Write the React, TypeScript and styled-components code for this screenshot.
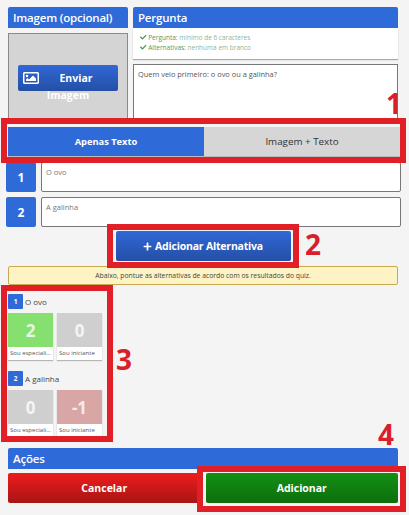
import React from 'react';
import styled, { createGlobalStyle } from 'styled-components';
import { FaCheck, FaPlus, FaRegImage } from 'react-icons/fa';

const GlobalStyle = createGlobalStyle`
  html, body {
    margin: 0;
    background: #f4f4f4;
    font-family: "Open Sans", "Liberation Sans", sans-serif;
  }
  * {
    box-sizing: border-box;
  }
`;

const Page = styled.div`
  position: relative;
  width: 409px;
  height: 515px;
  padding: 7px 11px 0 8px;
  overflow: hidden;
`;

const TopRow = styled.div`
  display: flex;
  gap: 5px;
  height: 120px;
`;

const LeftColumn = styled.div`
  width: 120px;
  flex: none;
`;

const RightColumn = styled.div`
  flex: 1;
`;

const SectionHeader = styled.div`
  height: 21px;
  padding-left: 5px;
  background: #2f6ad9;
  border-radius: 2px 2px 0 0;
  color: #fff;
  font-size: 11.5px;
  font-weight: 600;
  letter-spacing: -0.2px;
  line-height: 21px;
  white-space: nowrap;
`;

const ImageBox = styled.div`
  height: 87px;
  margin-top: 5px;
  padding-top: 31px;
  display: flex;
  justify-content: center;
  background: #d4d4d4;
  border: 1px solid #8a8a8a;
`;

const UploadButton = styled.div`
  position: relative;
  width: 100px;
  height: 26px;
  padding-top: 5px;
  background: linear-gradient(#3068d6, #244fa6);
  border-radius: 2px;
  color: #fff;
  font-size: 10.5px;
  font-weight: 700;
  line-height: 17px;
  text-align: center;

  svg {
    position: absolute;
    left: 5px;
    top: 5px;
    font-size: 16px;
  }
`;

const UploadFirstWord = styled.div`
  padding-left: 16px;
`;

const Hints = styled.div`
  height: 31px;
  padding: 5px 7px 0;
  background: #fff;
  box-shadow: 0 1px 1px rgba(0, 0, 0, 0.3);
  font-size: 6.5px;
  line-height: 10px;
  color: #8fb69a;
`;

const HintLine = styled.div`
  white-space: nowrap;

  svg {
    font-size: 6.5px;
    color: #3c9a4e;
    vertical-align: -0.5px;
  }

  b {
    font-weight: 400;
    color: #4f9a63;
  }
`;

const Question = styled.div`
  height: 60px;
  margin-top: 5px;
  padding: 3px 4px;
  background: #fff;
  border: 1px solid #777;
  font-size: 7.4px;
  line-height: 12px;
  color: #555;
`;

const TypeTabs = styled.div`
  display: flex;
  height: 30px;
  margin: 0 -2px 5px 0;
  border-bottom: 1px solid #bbb;
`;

const TypeTab = styled.div<{ $active?: boolean }>`
  flex: 1;
  display: flex;
  align-items: center;
  justify-content: center;
  background: ${(p) => (p.$active ? '#2f6ad9' : '#d6d6d6')};
  color: ${(p) => (p.$active ? '#fff' : '#333')};
  font-size: ${(p) => (p.$active ? 9.3 : 9.8)}px;
  font-weight: ${(p) => (p.$active ? 700 : 400)};
`;

const Alternatives = styled.div`
  display: flex;
  flex-direction: column;
  gap: 5px;
  margin: 0 -3px 0 -2px;
`;

const AlternativeRow = styled.div`
  display: flex;
  gap: 5px;
  height: 30px;
`;

const NumberBadge = styled.div`
  width: 30px;
  display: flex;
  align-items: center;
  justify-content: center;
  background: #2f6ad9;
  border-radius: 2px;
  color: #fff;
  font-size: 12px;
  font-weight: 700;
`;

const AlternativeInput = styled.div`
  flex: 1;
  padding: 4px 4px;
  background: #fff;
  border: 1px solid #777;
  border-radius: 2px;
  font-size: 7.5px;
  line-height: 10px;
  color: #777;
`;

const AddRow = styled.div`
  display: flex;
  justify-content: center;
  margin: 4px 0 5px;
`;

const AddButton = styled.div`
  width: 175px;
  height: 30px;
  display: flex;
  align-items: center;
  justify-content: center;
  gap: 3px;
  background: linear-gradient(#3068d6, #244fa6);
  border-radius: 2px;
  color: #fff;
  font-size: 10.5px;
  font-weight: 700;
  letter-spacing: -0.2px;

  svg {
    font-size: 9px;
  }
`;

const Notice = styled.div`
  height: 19px;
  background: #fdf3c4;
  border: 1px solid #c9a94e;
  border-radius: 2px;
  color: #444;
  font-size: 6.8px;
  line-height: 17px;
  text-align: center;
`;

const ScoreBlock = styled.div`
  margin-top: 9px;
  margin-bottom: 11px;

  & + & {
    margin-top: 0;
  }
`;

const ScoreTitle = styled.div`
  display: flex;
  align-items: center;
  gap: 2px;
  height: 15px;
  margin-bottom: 4px;
  color: #444;
  font-size: 8px;
`;

const SmallBadge = styled.div`
  width: 15px;
  height: 15px;
  display: flex;
  align-items: center;
  justify-content: center;
  background: #2f6ad9;
  border-radius: 1px;
  color: #fff;
  font-size: 6.5px;
  font-weight: 700;
`;

const ScoreCards = styled.div`
  display: flex;
  gap: 4px;
`;

const ScoreCard = styled.div`
  width: 45px;
  background: #fff;
  box-shadow: 0 1px 1px rgba(0, 0, 0, 0.25);
`;

const ScoreValue = styled.div<{ $color: string }>`
  height: 34px;
  display: flex;
  align-items: center;
  justify-content: center;
  background: ${(p) => p.$color};
  color: rgba(255, 255, 255, 0.8);
  font-size: 17px;
  font-weight: 700;
`;

const ScoreLabel = styled.div`
  height: 13px;
  padding-left: 2px;
  color: #555;
  font-size: 6px;
  line-height: 13px;
  white-space: nowrap;
  overflow: hidden;
`;

const ActionsHeader = styled(SectionHeader)`
  margin-top: 1px;
`;

const ActionRow = styled.div`
  display: flex;
  gap: 5px;
  margin-top: 4px;
`;

const ActionButton = styled.div<{ $from: string; $to: string }>`
  flex: 1;
  height: 30px;
  display: flex;
  align-items: center;
  justify-content: center;
  background: linear-gradient(${(p) => p.$from}, ${(p) => p.$to});
  border-radius: 2px;
  color: #fff;
  font-size: 10.5px;
  font-weight: 700;
`;

const Frame = styled.div<{ $x: number; $y: number; $w: number; $h: number }>`
  position: absolute;
  left: ${(p) => p.$x}px;
  top: ${(p) => p.$y}px;
  width: ${(p) => p.$w}px;
  height: ${(p) => p.$h}px;
  border: 6px solid #e01f26;
  pointer-events: none;
`;

const Marker = styled.div<{ $x: number; $y: number }>`
  position: absolute;
  left: ${(p) => p.$x}px;
  top: ${(p) => p.$y}px;
  color: #d9202a;
  font-size: 28px;
  font-weight: 700;
  line-height: 1;
`;

const scores = [
  { title: 'O ovo', values: [{ v: '2', c: '#86e070', l: 'Sou especiali...' }, { v: '0', c: '#cfcfcf', l: 'Sou iniciante' }] },
  { title: 'A galinha', values: [{ v: '0', c: '#cfcfcf', l: 'Sou especiali...' }, { v: '-1', c: '#d9a6a6', l: 'Sou iniciante' }] },
];

export default function App() {
  return (
    <Page>
      <GlobalStyle />
      <TopRow>
        <LeftColumn>
          <SectionHeader>Imagem (opcional)</SectionHeader>
          <ImageBox>
            <UploadButton>
              <FaRegImage />
              <UploadFirstWord>Enviar</UploadFirstWord>
              Imagem
            </UploadButton>
          </ImageBox>
        </LeftColumn>
        <RightColumn>
          <SectionHeader>Pergunta</SectionHeader>
          <Hints>
            <HintLine>
              <FaCheck /> <b>Pergunta:</b> mínimo de 6 caracteres
            </HintLine>
            <HintLine>
              <FaCheck /> <b>Alternativas:</b> nenhuma em branco
            </HintLine>
          </Hints>
          <Question>Quem veio primeiro: o ovo ou a galinha?</Question>
        </RightColumn>
      </TopRow>

      <TypeTabs>
        <TypeTab $active>Apenas Texto</TypeTab>
        <TypeTab>Imagem + Texto</TypeTab>
      </TypeTabs>

      <Alternatives>
        <AlternativeRow>
          <NumberBadge>1</NumberBadge>
          <AlternativeInput>O ovo</AlternativeInput>
        </AlternativeRow>
        <AlternativeRow>
          <NumberBadge>2</NumberBadge>
          <AlternativeInput>A galinha</AlternativeInput>
        </AlternativeRow>
      </Alternatives>

      <AddRow>
        <AddButton>
          <FaPlus /> Adicionar Alternativa
        </AddButton>
      </AddRow>

      <Notice>Abaixo, pontue as alternativas de acordo com os resultados do quiz.</Notice>

      {scores.map((s, i) => (
        <ScoreBlock key={s.title}>
          <ScoreTitle>
            <SmallBadge>{i + 1}</SmallBadge> {s.title}
          </ScoreTitle>
          <ScoreCards>
            {s.values.map((x) => (
              <ScoreCard key={x.l}>
                <ScoreValue $color={x.c}>{x.v}</ScoreValue>
                <ScoreLabel>{x.l}</ScoreLabel>
              </ScoreCard>
            ))}
          </ScoreCards>
        </ScoreBlock>
      ))}

      <ActionsHeader>Ações</ActionsHeader>
      <ActionRow>
        <ActionButton $from="#ee1c1c" $to="#a81515">Cancelar</ActionButton>
        <ActionButton $from="#149014" $to="#0d6e0d">Adicionar</ActionButton>
      </ActionRow>

      <Frame $x={1} $y={118} $w={405} $h={45} />
      <Frame $x={107} $y={224} $w={192} $h={44} />
      <Frame $x={1} $y={285} $w={112} $h={157} />
      <Frame $x={197} $y={466} $w={209} $h={46} />
      <Marker $x={386} $y={89}>1</Marker>
      <Marker $x={305} $y={230}>2</Marker>
      <Marker $x={116} $y={345}>3</Marker>
      <Marker $x={378} $y={420}>4</Marker>
    </Page>
  );
}
